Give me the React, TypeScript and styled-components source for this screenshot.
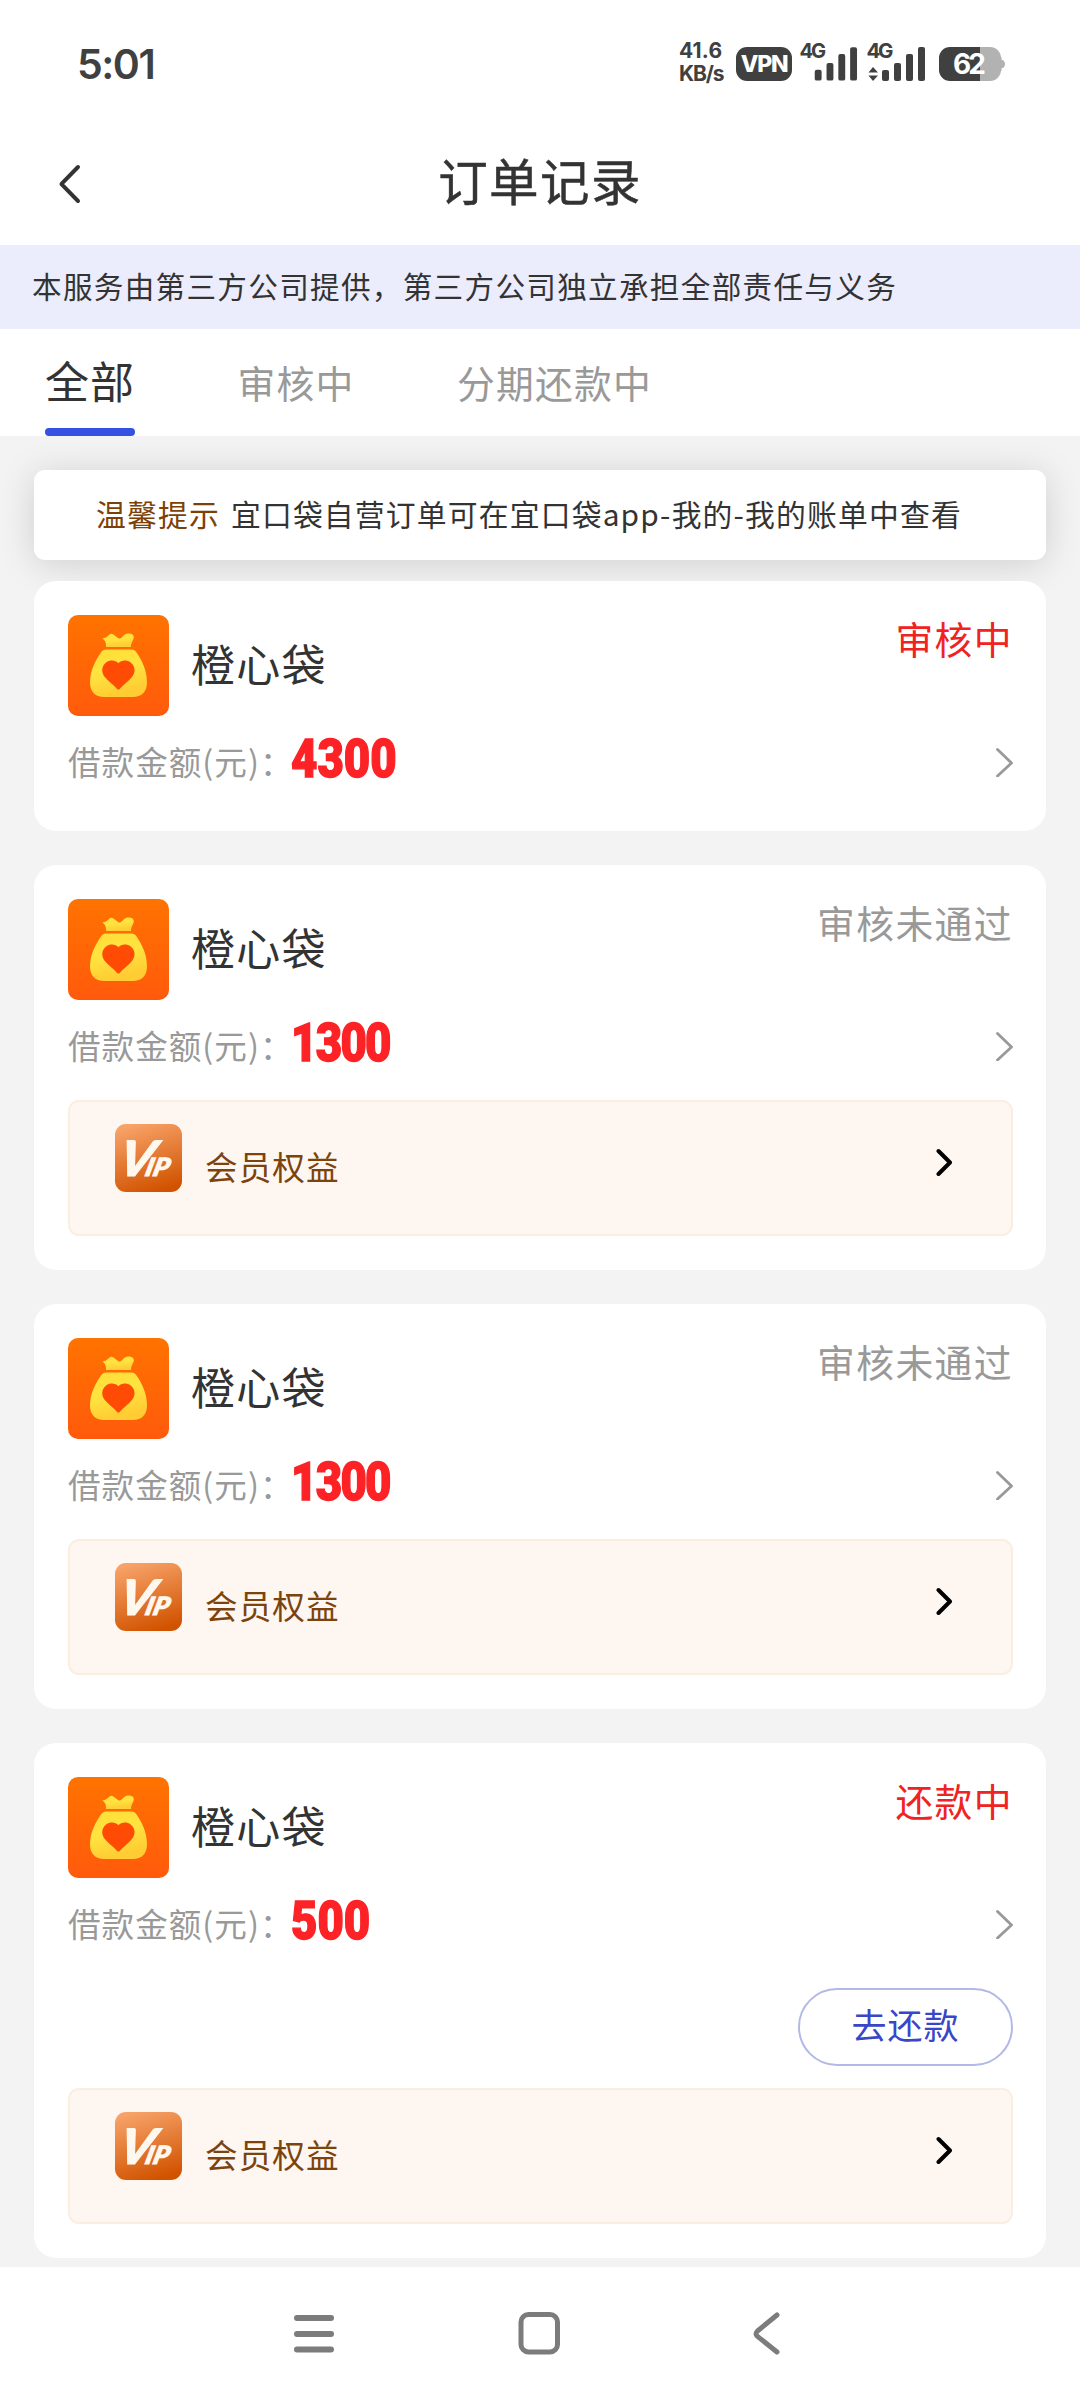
import React from 'react';
import styled, { createGlobalStyle } from 'styled-components';

const Global = createGlobalStyle`
  * { box-sizing: border-box; }
  html, body { margin: 0; padding: 0; background: #fff; }
  body {
    font-family: "Noto Sans CJK SC", "Noto Sans", sans-serif;
    color: #333;
  }
  svg { display: block; flex: none; }
`;

const Page = styled.div`
  width: 1080px;
  height: 2400px;
  display: flex;
  flex-direction: column;
  background: #fff;
  overflow: hidden;
`;

const StatusBar = styled.div`
  height: 125px;
  flex: none;
  display: flex;
  align-items: center;
  justify-content: space-between;
  padding: 2px 75px 0 77px;
  font-family: Inter, sans-serif;
  color: #404040;
`;

const Clock = styled.div`
  font-size: 41px;
  line-height: 50px;
  font-weight: 600;
  letter-spacing: -1.5px;
`;

const StatusIcons = styled.div`
  display: flex;
  align-items: flex-end;
  height: 40px;
  padding-bottom: 3px;
`;

const Speed = styled.div`
  width: 46px;
  margin-right: 11px;
  font-size: 21px;
  line-height: 23px;
  font-weight: 700;
  white-space: nowrap;
  margin-bottom: -4px;
`;

const SpeedLine = styled.div<{ $spacing: number }>`
  letter-spacing: ${(p) => p.$spacing}px;
`;

const VpnBadge = styled.div`
  width: 56px;
  height: 34px;
  margin-right: 7px;
  border-radius: 11px;
  background: #404040;
  color: #fff;
  font-size: 23px;
  line-height: 35px;
  font-weight: 800;
  letter-spacing: -1.2px;
  text-align: center;
`;

const Header = styled.header`
  height: 120px;
  flex: none;
  display: grid;
  grid-template-columns: 110px 1fr 110px;
  align-items: center;
`;

const BackButton = styled.div`
  padding: 0 0 2px 57px;
`;

const Title = styled.h1`
  margin: 0;
  padding-bottom: 10px;
  font-size: 49.5px;
  line-height: 60px;
  font-weight: 400;
  letter-spacing: 1.4px;
  text-align: center;
  -webkit-text-stroke: 0.5px #333;
`;

const Banner = styled.div`
  height: 84px;
  flex: none;
  padding-left: 32px;
  background: #ebedfc;
  font-size: 29.6px;
  letter-spacing: 1.3px;
  line-height: 81px;
  white-space: nowrap;
`;

const Tabs = styled.nav`
  height: 107px;
  flex: none;
  display: flex;
  gap: 102.5px;
  padding-left: 45px;
`;

const Tab = styled.div<{ $active?: boolean }>`
  display: flex;
  flex-direction: column;
  font-size: ${(p) => (p.$active ? 44 : 37.8)}px;
  letter-spacing: ${(p) => (p.$active ? 1 : 1.2)}px;
  line-height: ${(p) => (p.$active ? 102 : 106)}px;
  height: 107px;
  color: ${(p) => (p.$active ? '#333' : '#999')};
`;

const TabLabel = styled.span`
  height: 99px;
`;

const TabUnderline = styled.span`
  height: 8px;
  border-radius: 4px;
  background: #3551e2;
`;

const Content = styled.main`
  height: 1831px;
  flex: none;
  display: flex;
  flex-direction: column;
  padding: 34px 34px 0;
  background: #f3f3f3;
  overflow: hidden;
`;

const Notice = styled.div`
  height: 90px;
  flex: none;
  margin-bottom: 21px;
  padding-left: 62px;
  border-radius: 11px;
  background: #fff;
  box-shadow: 0 4px 36px rgba(0, 0, 0, 0.15);
  font-size: 29.8px;
  letter-spacing: 1.18px;
  line-height: 87px;
  white-space: nowrap;
`;

const NoticeTag = styled.span`
  margin-right: 11px;
  color: #7d4107;
`;

const OrderList = styled.div`
  display: flex;
  flex-direction: column;
  gap: 34px;
  position: relative;
`;

const Card = styled.article`
  display: flex;
  flex-direction: column;
  padding: 34px 33px 34px 34px;
  border-radius: 22px;
  background: #fff;
`;

const CardHead = styled.div`
  display: flex;
  height: 101px;
`;

const ProductName = styled.div`
  flex: 1;
  padding-left: 22px;
  font-size: 44px;
  letter-spacing: 1.2px;
  line-height: 96px;
`;

const OrderStatus = styled.div<{ $highlight: boolean }>`
  font-size: 37.8px;
  letter-spacing: 1.4px;
  line-height: 45px;
  color: ${(p) => (p.$highlight ? '#f02222' : '#999')};
`;

const AmountRow = styled.div`
  display: flex;
  align-items: center;
  height: 81px;
  padding-top: 11px;
`;

const AmountLabel = styled.div`
  width: 223px;
  padding-bottom: 3px;
  font-size: 32.6px;
  letter-spacing: 1px;
  line-height: 50px;
  color: #999;
  white-space: nowrap;
`;

const Amount = styled.div<{ $spacing: number }>`
  flex: 1;
  padding-bottom: 6px;
  font-family: Roboto, sans-serif;
  font-size: 53px;
  line-height: 60px;
  font-weight: 900;
  letter-spacing: ${(p) => p.$spacing}px;
  color: #fc2226;
  -webkit-text-stroke: 1.4px #fc2226;
  transform: scaleX(0.86);
  transform-origin: left center;
`;

const RepayButton = styled.button`
  display: block;
  width: 215px;
  height: 78px;
  margin: 29px 0 22px auto;
  padding: 0 0 6px;
  border: 2px solid #b2b9e6;
  border-radius: 39px;
  background: #fff;
  color: #3846c8;
  font-family: inherit;
  font-size: 35px;
  letter-spacing: 1px;
  line-height: 66px;
`;

const VipBox = styled.div<{ $spaced: boolean }>`
  display: flex;
  height: 136px;
  margin-top: ${(p) => (p.$spaced ? 19 : 0)}px;
  padding: 22px 58px 0 45px;
  border: 2px solid #faeee3;
  border-radius: 11px;
  background: #fef7f1;
`;

const VipLabel = styled.div`
  flex: 1;
  padding-left: 22px;
  font-size: 32.6px;
  letter-spacing: 1.1px;
  line-height: 83px;
  color: #7d430c;
`;

const VipArrow = styled.div`
  padding-top: 24px;
`;

const NavBar = styled.footer`
  height: 133px;
  flex: none;
  display: grid;
  grid-template-columns: 222px 235px auto;
  padding: 44px 0 0 293px;
`;

function Signal({ data }: { data?: boolean }) {
  return (
    <svg width={data ? 60 : 59} height="46" viewBox="0 -6 60 46">
      <text x="0.500" y="17" fontFamily="Inter, sans-serif" fontSize="20.500" fontWeight="700" fill="#404040" textLength="27">4G</text>
      <g fill="#404040">
        {data && <path d="M7 26l5 5.500H2.500zM2.500 34.500h9.500L7 40z" />}
        <rect x="16" y="29" width="7" height="11" rx="2" />
        <rect x="28" y="22" width="7" height="18" rx="2" />
        <rect x="40" y="13" width="7" height="27" rx="2" />
        <rect x="52" y="6" width="7" height="34" rx="2" />
      </g>
    </svg>
  );
}

const SignalPair = styled.div`
  display: flex;
  gap: 8px;
  margin-right: 13px;
`;

function Battery() {
  return (
    <svg width="66" height="34" viewBox="0 0 66 34">
      <path d="M60 10h2.500v2.500q3.500 1 3.500 4.500t-3.500 4.500V24H60z" fill="#b2b2b2" />
      <path d="M41 0h10a11 11 0 0 1 11 11v12a11 11 0 0 1-11 11H41z" fill="#b2b2b2" />
      <path d="M41 0H11A11 11 0 0 0 0 11v12a11 11 0 0 0 11 11h30z" fill="#404040" />
      <text x="14" y="27" fontFamily="Inter, sans-serif" fontSize="28" fontWeight="700" fill="#fff" textLength="33">62</text>
    </svg>
  );
}

function BagLogo() {
  return (
    <svg width="101" height="101" viewBox="0 0 101 101">
      <defs>
        <linearGradient id="bagBg" x1="0" y1="0" x2="0" y2="1">
          <stop offset="0" stopColor="#ff7300" />
          <stop offset="1" stopColor="#ff5a0c" />
        </linearGradient>
        <linearGradient id="bagBody" x1="0" y1="0" x2="0.3" y2="1">
          <stop offset="0" stopColor="#ffdd38" />
          <stop offset="0.5" stopColor="#ffe440" />
          <stop offset="1" stopColor="#ffcc33" />
        </linearGradient>
      </defs>
      <rect width="101" height="101" rx="10" fill="url(#bagBg)" />
      <path
        d="M34.500 23.500c2.500-.3 4.500-1.500 6.500-3.500 1.500-1.500 3-1.500 4.500-.5l4.500 3.500c1.200.8 2.300.8 3.300-.2l3.200-3c3.200-2.400 9.800-1.500 9.300 2.800-.2 2.600-2.800 5-2.800 9.400H38c0-4.200-.4-6-3.500-8.500z"
        fill="url(#bagBody)"
      />
      <path
        d="M38 34.500h25.500c2 0 3.600.9 4.700 2.500C73.500 44.500 79 55 79 67.500 79 77 73.500 82 65 82H36c-8.500 0-14-5-14-14.500C22 55 28 44.500 33.300 37c1.100-1.600 2.700-2.500 4.700-2.500z"
        fill="url(#bagBody)"
      />
      <path
        d="M50.400 48.200c3-3.200 8.500-3.500 12.300-.6 4.800 3.800 5 9.900 1.300 14.500-3.800 4.500-9 8.300-12.300 11.800-.9.800-1.800.8-2.600 0-3.200-3.500-8.500-7.300-12.300-11.800-3.700-4.600-3.500-10.700 1.300-14.500 3.800-2.900 9.300-2.600 12.300.6z"
        fill="#ff4b04"
      />
    </svg>
  );
}

function VipLogo() {
  return (
    <svg width="68" height="68" viewBox="0 0 68 68">
      <defs>
        <linearGradient id="vipBg" x1="0.3" y1="0" x2="0.6" y2="1">
          <stop offset="0" stopColor="#f7a268" />
          <stop offset="1" stopColor="#d15300" />
        </linearGradient>
      </defs>
      <rect width="67" height="68" rx="11" fill="url(#vipBg)" />
      <text
        transform="translate(1 52) skewX(-14) scale(1.07 1)"
        fill="#fff8ee"
        stroke="#fff8ee"
        strokeWidth="1"
        fontFamily="Lato, sans-serif"
        fontWeight="900"
        fontStyle="italic"
        fontSize="49"
      >
        V<tspan fontSize="25" dx="-6">IP</tspan>
      </text>
    </svg>
  );
}

type Order = { amount: string; status: string; highlight: boolean; vip: boolean; repay: boolean };

const orders: Order[] = [
  { amount: '4300', status: '审核中', highlight: true, vip: false, repay: false },
  { amount: '1300', status: '审核未通过', highlight: false, vip: true, repay: false },
  { amount: '1300', status: '审核未通过', highlight: false, vip: true, repay: false },
  { amount: '500', status: '还款中', highlight: true, vip: true, repay: true },
];

function OrderCard({ order }: { order: Order }) {
  return (
    <Card>
      <CardHead>
        <BagLogo />
        <ProductName>橙心袋</ProductName>
        <OrderStatus $highlight={order.highlight}>{order.status}</OrderStatus>
      </CardHead>
      <AmountRow>
        <AmountLabel>借款金额(元)：</AmountLabel>
        <Amount $spacing={order.amount[0] === '1' ? -2 : 0}>{order.amount}</Amount>
        <svg width="18" height="30" viewBox="0 0 18 30" fill="none" stroke="#999" strokeWidth="2.8" strokeLinecap="round" strokeLinejoin="round">
          <path d="M2.500 2.500l14 13.500L2.500 29" />
        </svg>
      </AmountRow>
      {order.repay && <RepayButton>去还款</RepayButton>}
      {order.vip && (
        <VipBox $spaced={!order.repay}>
          <VipLogo />
          <VipLabel>会员权益</VipLabel>
          <VipArrow>
            <svg width="17" height="29" viewBox="0 0 17 29" fill="none" stroke="#000" strokeWidth="4" strokeLinecap="round" strokeLinejoin="round">
              <path d="M2.500 3l11.500 11.500L2.500 26" />
            </svg>
          </VipArrow>
        </VipBox>
      )}
    </Card>
  );
}

export default function App() {
  return (
    <Page>
      <Global />
      <StatusBar>
        <Clock>5:01</Clock>
        <StatusIcons>
          <Speed>
            <SpeedLine $spacing={0.2}>41.6</SpeedLine>
            <SpeedLine $spacing={-1.1}>KB/s</SpeedLine>
          </Speed>
          <VpnBadge>VPN</VpnBadge>
          <SignalPair>
            <Signal />
            <Signal data />
          </SignalPair>
          <Battery />
        </StatusIcons>
      </StatusBar>
      <Header>
        <BackButton>
          <svg width="25" height="42" viewBox="0 0 25 42" fill="none" stroke="#333" strokeWidth="4" strokeLinecap="round" strokeLinejoin="round">
            <path d="M21 4L5 20.300Q4.300 21 5 21.700L21 38" />
          </svg>
        </BackButton>
        <Title>订单记录</Title>
      </Header>
      <Banner>本服务由第三方公司提供，第三方公司独立承担全部责任与义务</Banner>
      <Tabs>
        <Tab $active>
          <TabLabel>全部</TabLabel>
          <TabUnderline />
        </Tab>
        <Tab>
          <TabLabel>审核中</TabLabel>
        </Tab>
        <Tab>
          <TabLabel>分期还款中</TabLabel>
        </Tab>
      </Tabs>
      <Content>
        <Notice>
          <NoticeTag>温馨提示</NoticeTag>
          宜口袋自营订单可在宜口袋app-我的-我的账单中查看
        </Notice>
        <OrderList>
          {orders.map((order, i) => (
            <OrderCard key={i} order={order} />
          ))}
        </OrderList>
      </Content>
      <NavBar>
        <svg width="42" height="44" viewBox="0 0 42 44" stroke="#7c7c7c" strokeWidth="6" strokeLinecap="round">
          <path d="M4 7h34M4 23h34M4 38.500h34" />
        </svg>
        <svg width="50" height="46" viewBox="0 0 50 46" fill="none" stroke="#7c7c7c" strokeWidth="5">
          <rect x="6" y="3.500" width="36.500" height="37.500" rx="7.500" />
        </svg>
        <svg width="32" height="46" viewBox="0 0 32 46" fill="none" stroke="#7c7c7c" strokeWidth="5" strokeLinecap="round" strokeLinejoin="round">
          <path d="M27 4L7.500 20Q4.500 22.700 7.500 25.400L27 41" />
        </svg>
      </NavBar>
    </Page>
  );
}
